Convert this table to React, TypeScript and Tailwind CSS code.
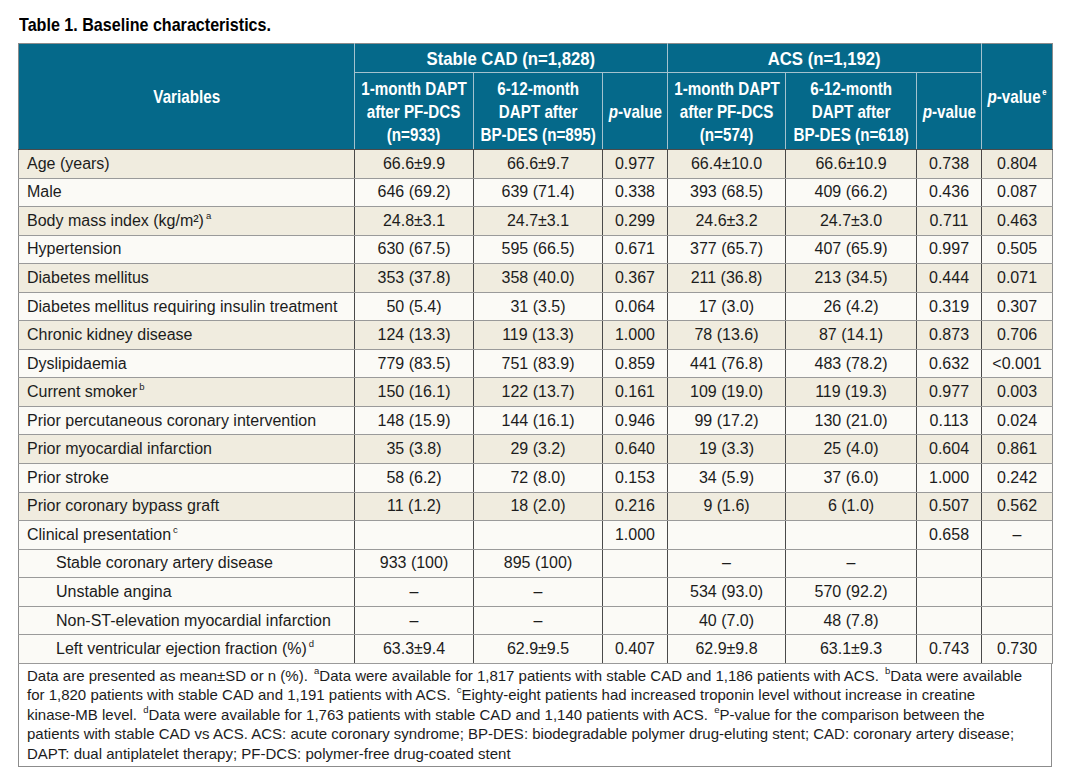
import React from "react";

type Row = { label: React.ReactNode; cells: string[]; indent?: boolean; beige?: boolean };

const Sup = ({ c }: { c: string }) => (
  <sup className="relative top-[-1px] ml-[2px] align-super text-[9.5px] leading-none">{c}</sup>
);

const rows: Row[] = [
  { label: "Age (years)", cells: ["66.6±9.9", "66.6±9.7", "0.977", "66.4±10.0", "66.6±10.9", "0.738", "0.804"], beige: true },
  { label: "Male", cells: ["646 (69.2)", "639 (71.4)", "0.338", "393 (68.5)", "409 (66.2)", "0.436", "0.087"] },
  {
    label: (
      <>
        Body mass index (kg/m²)
        <Sup c="a" />
      </>
    ),
    cells: ["24.8±3.1", "24.7±3.1", "0.299", "24.6±3.2", "24.7±3.0", "0.711", "0.463"],
    beige: true,
  },
  { label: "Hypertension", cells: ["630 (67.5)", "595 (66.5)", "0.671", "377 (65.7)", "407 (65.9)", "0.997", "0.505"] },
  { label: "Diabetes mellitus", cells: ["353 (37.8)", "358 (40.0)", "0.367", "211 (36.8)", "213 (34.5)", "0.444", "0.071"], beige: true },
  { label: "Diabetes mellitus requiring insulin treatment", cells: ["50 (5.4)", "31 (3.5)", "0.064", "17 (3.0)", "26 (4.2)", "0.319", "0.307"] },
  { label: "Chronic kidney disease", cells: ["124 (13.3)", "119 (13.3)", "1.000", "78 (13.6)", "87 (14.1)", "0.873", "0.706"], beige: true },
  { label: "Dyslipidaemia", cells: ["779 (83.5)", "751 (83.9)", "0.859", "441 (76.8)", "483 (78.2)", "0.632", "<0.001"] },
  {
    label: (
      <>
        Current smoker
        <Sup c="b" />
      </>
    ),
    cells: ["150 (16.1)", "122 (13.7)", "0.161", "109 (19.0)", "119 (19.3)", "0.977", "0.003"],
    beige: true,
  },
  { label: "Prior percutaneous coronary intervention", cells: ["148 (15.9)", "144 (16.1)", "0.946", "99 (17.2)", "130 (21.0)", "0.113", "0.024"] },
  { label: "Prior myocardial infarction", cells: ["35 (3.8)", "29 (3.2)", "0.640", "19 (3.3)", "25 (4.0)", "0.604", "0.861"], beige: true },
  { label: "Prior stroke", cells: ["58 (6.2)", "72 (8.0)", "0.153", "34 (5.9)", "37 (6.0)", "1.000", "0.242"] },
  { label: "Prior coronary bypass graft", cells: ["11 (1.2)", "18 (2.0)", "0.216", "9 (1.6)", "6 (1.0)", "0.507", "0.562"], beige: true },
  {
    label: (
      <>
        Clinical presentation
        <Sup c="c" />
      </>
    ),
    cells: ["", "", "1.000", "", "", "0.658", "–"],
  },
  { label: "Stable coronary artery disease", cells: ["933 (100)", "895 (100)", "", "–", "–", "", ""], indent: true },
  { label: "Unstable angina", cells: ["–", "–", "", "534 (93.0)", "570 (92.2)", "", ""], indent: true },
  { label: "Non-ST-elevation myocardial infarction", cells: ["–", "–", "", "40 (7.0)", "48 (7.8)", "", ""], indent: true },
  {
    label: (
      <>
        Left ventricular ejection fraction (%)
        <Sup c="d" />
      </>
    ),
    cells: ["63.3±9.4", "62.9±9.5", "0.407", "62.9±9.8", "63.1±9.3", "0.743", "0.730"],
    indent: true,
  },
];

const PVal = () => (
  <>
    <span className="italic">p</span>-value
  </>
);

const HeadLines = ({ lines, wide }: { lines: React.ReactNode[]; wide?: boolean }) => (
  <div className="flex flex-col items-center">
    {lines.map((l, i) => (
      <span key={i} className={`inline-block whitespace-nowrap ${wide ? "scale-x-[0.88]" : "scale-x-[0.8]"}`}>
        {l}
      </span>
    ))}
  </div>
);

const thMid = "border-r border-b border-r-[#a4c2ce] border-b-[#4a4a4a] p-0 text-center align-middle font-bold";

export default function App() {
  return (
    <div className="min-h-[780px] w-[1069px] bg-white pl-[18px] pt-[14px] font-['Liberation_Sans',Arial,sans-serif] text-[#1c1c1c]">
      <div className="pl-[1px] text-[18.5px] font-bold leading-[22px] text-black">
        <span className="inline-block origin-left scale-x-[0.87] whitespace-nowrap">Table 1. Baseline characteristics.</span>
      </div>
      <div className="mt-[7px] w-[1034px]">
        <table className="w-[1034px] table-fixed border-collapse border border-[#8c8c8c]">
          <colgroup>
            <col className="w-[336px]" />
            <col className="w-[119px]" />
            <col className="w-[129px]" />
            <col className="w-[65px]" />
            <col className="w-[118px]" />
            <col className="w-[131px]" />
            <col className="w-[65px]" />
            <col className="w-[71px]" />
          </colgroup>
          <thead className="bg-[#05698a] text-[19px] font-bold leading-[23px] text-white">
            <tr className="h-[29px]">
              <th rowSpan={2} className={thMid}>
                <HeadLines lines={["Variables"]} />
              </th>
              <th colSpan={3} className="border-r border-b border-[#a4c2ce] p-0 text-center align-middle font-bold">
                <HeadLines wide lines={["Stable CAD (n=1,828)"]} />
              </th>
              <th colSpan={3} className="border-r border-b border-[#a4c2ce] p-0 text-center align-middle font-bold">
                <HeadLines wide lines={["ACS (n=1,192)"]} />
              </th>
              <th rowSpan={2} className="border-b border-b-[#4a4a4a] p-0 text-center align-middle font-bold">
                <HeadLines
                  lines={[
                    <>
                      <PVal />
                      <Sup c="e" />
                    </>,
                  ]}
                />
              </th>
            </tr>
            <tr className="h-[77px]">
              <th className={thMid}>
                <HeadLines lines={["1-month DAPT", "after PF-DCS", "(n=933)"]} />
              </th>
              <th className={thMid}>
                <HeadLines lines={["6-12-month", "DAPT after", "BP-DES (n=895)"]} />
              </th>
              <th className={thMid}>
                <HeadLines lines={[<PVal key="p" />]} />
              </th>
              <th className={thMid}>
                <HeadLines lines={["1-month DAPT", "after PF-DCS", "(n=574)"]} />
              </th>
              <th className={thMid}>
                <HeadLines lines={["6-12-month", "DAPT after", "BP-DES (n=618)"]} />
              </th>
              <th className={thMid}>
                <HeadLines lines={[<PVal key="p" />]} />
              </th>
            </tr>
          </thead>
          <tbody className="text-[16px] leading-[18px]">
            {rows.map((r, i) => (
              <tr key={i} className={`h-[28.56px] ${r.beige ? "bg-[#f0ecdf]" : "bg-[#fbfaf6]"}`}>
                <td className={`border-b border-b-[#9a9a9a] p-0 ${r.indent ? "pl-[37px]" : "pl-[8px]"} whitespace-nowrap`}>
                  {r.label}
                </td>
                {r.cells.map((c, j) => (
                  <td key={j} className="border-b border-l border-b-[#9a9a9a] border-l-[#4a4a4a] p-0 text-center whitespace-nowrap">
                    {c}
                  </td>
                ))}
              </tr>
            ))}
          </tbody>
        </table>
        <div className="border-x border-b border-[#8c8c8c] bg-white px-[8px] pt-[2px] pb-[3px] text-[15px] leading-[19.5px] whitespace-nowrap text-[#1c1c1c]">
          <div>
            Data are presented as mean±SD or n (%). <Sup c="a" />
            Data were available for 1,817 patients with stable CAD and 1,186 patients with ACS. <Sup c="b" />
            Data were available
          </div>
          <div>
            for 1,820 patients with stable CAD and 1,191 patients with ACS. <Sup c="c" />
            Eighty-eight patients had increased troponin level without increase in creatine
          </div>
          <div>
            kinase-MB level. <Sup c="d" />
            Data were available for 1,763 patients with stable CAD and 1,140 patients with ACS. <Sup c="e" />
            P-value for the comparison between the
          </div>
          <div>
            patients with stable CAD vs ACS. ACS: acute coronary syndrome; BP-DES: biodegradable polymer drug-eluting stent; CAD:
            coronary artery disease;
          </div>
          <div>DAPT: dual antiplatelet therapy; PF-DCS: polymer-free drug-coated stent</div>
        </div>
      </div>
    </div>
  );
}
